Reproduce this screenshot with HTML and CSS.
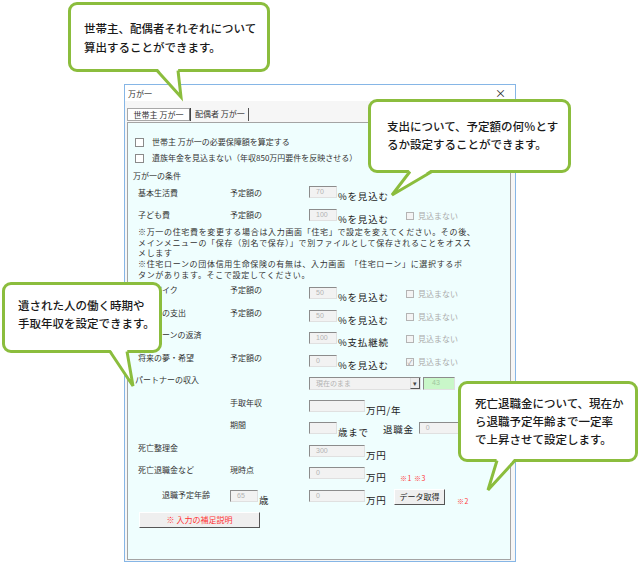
FILE: index.html
```html
<!DOCTYPE html>
<html lang="ja">
<head>
<meta charset="UTF-8">
<meta name="viewport" content="width=device-width, initial-scale=1.0">
<title>万が一</title>
<link rel="stylesheet" href="styles.css">
</head>
<body>
    <!-- 万が一 設定フォーム -->
    <div class="dialog">
        <div class="titlebar"><span>万が一</span><span class="close">×</span></div>
        <div class="tabs">
            <span class="tab active">世帯主 万が一</span>
            <span class="tab">配偶者 万が一</span>
        </div>
        <div class="panel">
            <div class="opt"><span class="cb"></span>世帯主 万が一の必要保障額を算定する</div>
            <div class="opt"><span class="cb"></span>遺族年金を見込まない（年収850万円要件を反映させる）</div>
            <div class="heading">万が一の条件</div>

            <div class="row first">
                <span class="lbl">基本生活費</span>
                <span class="lbl2">予定額の</span>
                <span class="field"><span class="box">70</span><span class="unit">%を見込む</span></span>
            </div>
            <div class="row short">
                <span class="lbl">子ども費</span>
                <span class="lbl2">予定額の</span>
                <span class="field"><span class="box">100</span><span class="unit">%を見込む</span></span>
                <span class="chk"><span class="cb"></span>見込まない</span>
            </div>

            <p class="note">※万一の住宅費を変更する場合は入力画面「住宅」で設定を変えてください。その後、<br>メインメニューの「保存（別名で保存）」で別ファイルとして保存されることをオスス<br>メします</p>
            <p class="note">※住宅ローンの団体信用生命保険の有無は、入力画面　「住宅ローン」に選択するボ<br>タンがあります。そこで設定してください。</p>

            <div class="row gap">
                <span class="lbl">車・バイク</span>
                <span class="lbl2">予定額の</span>
                <span class="field"><span class="box">50</span><span class="unit">%を見込む</span></span>
                <span class="chk"><span class="cb"></span>見込まない</span>
            </div>
            <div class="row">
                <span class="lbl">その他の支出</span>
                <span class="lbl2">予定額の</span>
                <span class="field"><span class="box">50</span><span class="unit">%を見込む</span></span>
                <span class="chk"><span class="cb"></span>見込まない</span>
            </div>
            <div class="row">
                <span class="lbl">住宅ローンの返済</span>
                <span class="lbl2"></span>
                <span class="field"><span class="box">100</span><span class="unit">%支払継続</span></span>
                <span class="chk"><span class="cb"></span>見込まない</span>
            </div>
            <div class="row">
                <span class="lbl">将来の夢・希望</span>
                <span class="lbl2">予定額の</span>
                <span class="field"><span class="box">0</span><span class="unit">%を見込む</span></span>
                <span class="chk"><span class="cb checked">✓</span>見込まない</span>
            </div>
            <div class="row">
                <span class="lbl partner">パートナーの収入</span>
                <span class="select">現在のまま<span class="drop">▾</span></span>
                <span class="box age">43</span>
            </div>
            <div class="row">
                <span class="lbl"></span>
                <span class="lbl2">手取年収</span>
                <span class="field"><span class="box wide"></span><span class="unit">万円/年</span></span>
            </div>
            <div class="row">
                <span class="lbl"></span>
                <span class="lbl2">期間</span>
                <span class="box"></span><span class="unit">歳まで</span>
                <span class="unit retire">退職金</span><span class="box wide">0</span>
            </div>
            <div class="row">
                <span class="lbl">死亡整理金</span>
                <span class="lbl2"></span>
                <span class="field"><span class="box wide">300</span><span class="unit">万円</span></span>
            </div>
            <div class="row">
                <span class="lbl">死亡退職金など</span>
                <span class="lbl2">現時点</span>
                <span class="field narrow"><span class="box wide">0</span><span class="unit">万円</span></span>
                <span class="mark">※1 ※3</span>
            </div>
            <div class="row">
                <span class="lbl indent">退職予定年齢</span>
                <span class="lbl2 inline"><span class="box">65</span><span class="unit">歳</span></span>
                <span class="field tight"><span class="box wide">0</span><span class="unit">万円</span></span>
                <button class="btn">データ取得</button>
                <span class="mark">※2</span>
            </div>

            <button class="btn help">※ 入力の補足説明</button>
        </div>
    </div>

    <!-- 吹き出し -->
    <div class="callout c1">
        世帯主、配偶者それぞれについて<br>算出することができます。
        <svg width="202" height="96"><polygon points="89,66 110,66 113,95" /><polyline points="89,68.5 113,95 110,68.5" /></svg>
    </div>
    <div class="callout c2">
        支出について、予定額の何％とす<br>るか設定することができます。
        <svg width="203" height="97"><polygon points="42,70 64,70 24,96" /><polyline points="42,72.5 24,96 64,72.5" /></svg>
    </div>
    <div class="callout c3">
        遺された人の働く時期や<br>手取年収を設定できます。
        <svg width="160" height="105"><polygon points="108,67 125,67 131,104" /><polyline points="108,69.5 131,104 125,69.5" /></svg>
    </div>
    <div class="callout c4">
        死亡退職金について、現在か<br>ら退職予定年齢まで一定率<br>で上昇させて設定します。
        <svg width="180" height="110"><polygon points="39,77 57,77 30,109" /><polyline points="39,79.5 30,109 57,79.5" /></svg>
    </div>
</body>
</html>
```

FILE: styles.css
```css
/* ページ全体 */
body {
    margin: 0;
    width: 640px;
    height: 564px;
    position: relative;
    overflow: hidden;
    background: #fff;
    font-family: "Noto Sans CJK JP", sans-serif;
    color: #333;
}

/* フォーム枠 */
.dialog {
    box-sizing: border-box;
    width: 392px;
    height: 478px;
    margin: 84px 0 0 124px;
    padding: 0 4px 1px 2px;
    border: 1px solid #86b6e6;
    background: #f6f6f6;
    display: flex;
    flex-direction: column;
}

.titlebar {
    height: 16px;
    margin: 0 -4px 0 -2px;
    padding: 0 9px 0 3px;
    background: #fff;
    display: flex;
    justify-content: space-between;
    align-items: center;
    font-size: 8px;
}

.close {
    font-size: 11px;
    color: #222;
}

.tabs {
    height: 21px;
    display: flex;
    align-items: flex-end;
    padding-bottom: 1px;
    box-sizing: border-box;
    font-size: 8px;
}

.tab {
    height: 13px;
    line-height: 12px;
    padding: 0 3px;
    border-right: 1px solid #555;
}

.tab.active {
    box-sizing: border-box;
    width: 63px;
    border: 1px solid #a8a8a8;
    border-right-color: #777;
    background: #fff;
    margin-right: 2px;
    box-shadow: 1px 0 0 #444;
    text-align: center;
}

/* タブの中身 */
.panel {
    flex: 1;
    border: 1px solid #a4a4a4;
    background: #effefe;
    padding: 11px 0 0 10px;
    font-size: 8px;
    line-height: 10px;
}

.cb {
    box-sizing: border-box;
    display: inline-block;
    width: 9px;
    height: 9px;
    border: 1px solid #8a8a8a;
    background: #fff;
    font-size: 7px;
    line-height: 7px;
    text-align: center;
    color: #999;
}

.opt {
    height: 16px;
    margin-left: -3px;
    display: flex;
    align-items: center;
}

.opt .cb {
    margin-right: 8px;
}

.heading {
    height: 16px;
    margin: 2px 0 0 -5px;
    line-height: 16px;
}

.row {
    display: flex;
    align-items: flex-start;
    height: 22.5px;
}

.row.first {
    margin-top: 2px;
    height: 23px;
}

.row.short {
    height: 18px;
}

.row.gap {
    margin-top: 7px;
}

.lbl {
    width: 92px;
    flex-shrink: 0;
    margin-top: -2px;
    white-space: nowrap;
}

.lbl.partner {
    width: 174px;
    margin-left: -3px;
}

.lbl.indent {
    width: 68px;
    padding-left: 24px;
    margin-top: 0;
}

.lbl2 {
    width: 79px;
    flex-shrink: 0;
    margin-top: -2px;
}

.row.first .lbl,
.row.first .lbl2 {
    margin-top: 2px;
}

.row.short .lbl,
.row.short .lbl2 {
    margin-top: 1px;
}

.lbl2.inline {
    display: flex;
    margin-top: 0;
}

.field {
    width: 97px;
    flex-shrink: 0;
    display: flex;
    align-items: flex-start;
}

.field.narrow {
    width: 91px;
}

.field.tight {
    width: 85px;
}

/* 入力欄 */
.box {
    box-sizing: border-box;
    flex-shrink: 0;
    width: 28px;
    height: 12px;
    border: 1px solid #e0e0e0;
    border-top-color: #8c8c8c;
    border-left-color: #8c8c8c;
    background: #f2f2f2;
    color: #b2b2b2;
    font-family: "Liberation Sans", sans-serif;
    font-size: 7px;
    line-height: 10px;
    padding-left: 6px;
}

.box.wide {
    width: 56px;
}

.box.age {
    width: 32px;
    margin-left: 2px;
    height: 13px;
    background: #c9f7c9;
    color: #9fc69f;
    padding-left: 8px;
}

.unit {
    margin: 4px 0 0 1px;
    font-size: 9.5px;
    line-height: 12px;
    letter-spacing: 0.8px;
    color: #222;
    white-space: nowrap;
}

.unit.retire {
    margin-left: 14px;
    margin-right: 5px;
    margin-top: 1px;
}

.select {
    box-sizing: border-box;
    position: relative;
    width: 112px;
    height: 13px;
    border: 1px solid #e0e0e0;
    border-top-color: #8c8c8c;
    border-left-color: #8c8c8c;
    background: #f2f2f2;
    color: #b2b2b2;
    font-size: 7px;
    line-height: 11px;
    padding-left: 6px;
}

.drop {
    position: absolute;
    right: 0;
    top: 0;
    width: 10px;
    height: 11px;
    border-left: 1px solid #ddd;
    border-right: 1px solid #555;
    border-bottom: 1px solid #555;
    box-sizing: border-box;
    background: #ececec;
    color: #444;
    font-size: 7px;
    line-height: 10px;
    text-align: center;
}

.chk {
    display: flex;
    align-items: center;
    margin-top: 2px;
    color: #ababab;
}

.chk .cb {
    width: 8px;
    height: 8px;
    border-color: #b4b4b4;
    background: #f4f4f4;
    margin-right: 4px;
}

.note {
    margin: 0;
    font-size: 8px;
    line-height: 10.5px;
    letter-spacing: 0.67px;
    white-space: nowrap;
}

.note + .note {
    margin-top: 0.5px;
}

.mark {
    margin-top: 7px;
    font-size: 7px;
    line-height: 8px;
    color: #ff3b3b;
    letter-spacing: 0.5px;
}

/* ボタン */
.btn {
    box-sizing: border-box;
    height: 16px;
    padding: 0;
    border: 1px solid #fff;
    border-right-color: #555;
    border-bottom-color: #555;
    background: #efefef;
    font-family: "Noto Sans CJK JP", sans-serif;
    font-size: 8px;
    line-height: 14px;
    color: #222;
}

.row .btn {
    width: 51px;
    margin: -1px 12px 0 0;
}

.btn.help {
    display: block;
    width: 121px;
    margin: 0 0 0 1px;
    color: #ff3333;
}

/* 吹き出し */
.callout {
    position: absolute;
    box-sizing: border-box;
    border: 3px solid #8bbd3d;
    border-radius: 9px;
    background: #fff;
    font-size: 11.5px;
    line-height: 18px;
    font-weight: 500;
    color: #1a1a1a;
    white-space: nowrap;
}

.callout svg {
    position: absolute;
    left: -3px;
    top: -3px;
    overflow: visible;
}

.callout polygon {
    fill: #fff;
}

.callout polyline {
    fill: none;
    stroke: #8bbd3d;
    stroke-width: 3;
    stroke-linejoin: miter;
}

.c1 {
    left: 68px;
    top: 2px;
    width: 202px;
    height: 70px;
    padding: 14px 0 0 13px;
    line-height: 19px;
}

.c2 {
    left: 368px;
    top: 99px;
    width: 203px;
    height: 74px;
    padding: 15px 0 0 16px;
}

.c3 {
    left: 2px;
    top: 282px;
    width: 160px;
    height: 71px;
    padding: 11px 0 0 13px;
}

.c4 {
    left: 458px;
    top: 381px;
    width: 180px;
    height: 81px;
    padding: 10px 0 0 14px;
}
```
